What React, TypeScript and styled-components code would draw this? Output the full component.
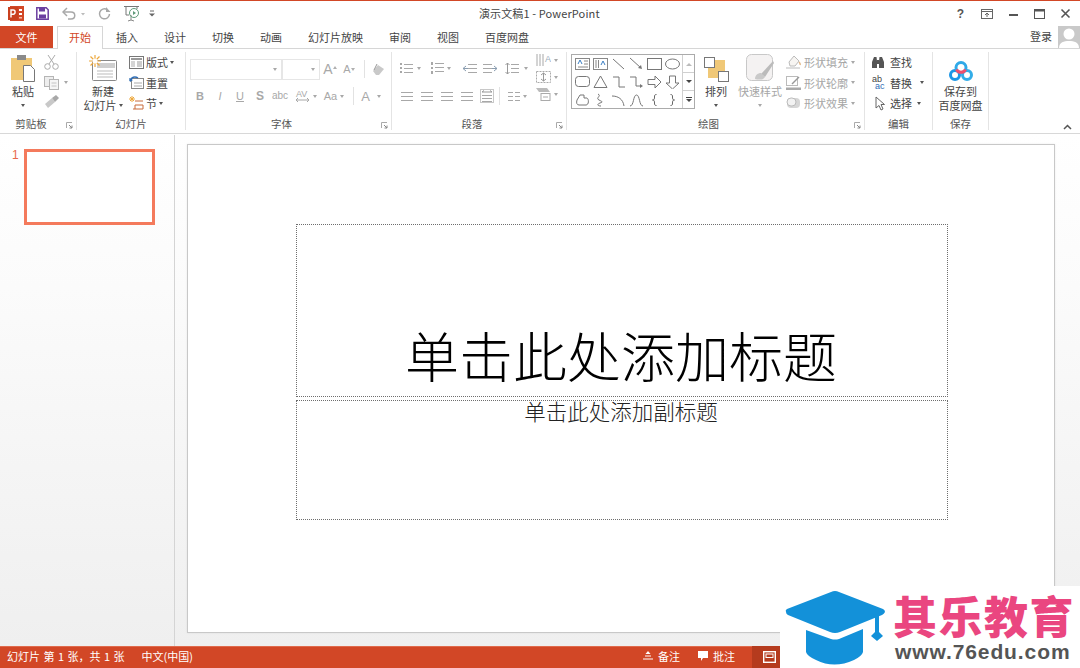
import React from 'react';
import styled, { createGlobalStyle } from 'styled-components';

const Global = createGlobalStyle`
  html, body { margin: 0; padding: 0; background: #fff; }
  * { box-sizing: border-box; }
  body { font-family: "Noto Sans CJK SC", "Liberation Sans", sans-serif; color: #444; }
`;

const Page = styled.div`
  position: relative; width: 1080px; height: 668px; overflow: hidden; display: flex; flex-direction: column;
  border-top: 1px solid #d24726; background: #fff;
`;

/* title bar */
const TitleBar = styled.div`height: 25px; display: flex; align-items: center; position: relative; flex: none;`;
const Qat = styled.div`display: flex; align-items: center; width: 479px; height: 25px; padding-left: 8px;`;
const QatSlot = styled.span<{ $w: number }>`width: ${p => p.$w}px; display: flex; align-items: center; flex: none;`;
const Title = styled.div`font-size: 11px; color: #444; width: 470px; white-space: nowrap; line-height: 25px; letter-spacing: .12px;`;
const WinControls = styled.div`margin-left: auto; display: flex; align-items: center; padding-right: 9px; gap: 15px;`;
const Help = styled.span`font-family: "Liberation Sans", sans-serif; font-size: 12px; font-weight: 700; color: #555; width: 11px; text-align: center; line-height: 14px;`;

/* tabs */
const TabRow = styled.div`height: 23px; display: flex; align-items: stretch; border-bottom: 1px solid #d6d6d6; flex: none;`;
const FileTab = styled.div`width: 53px; height: 22px; background: #d24726; color: #fff; font-size: 11px; display: flex; align-items: center; justify-content: center; margin-right: 4px; padding-bottom: 1px;`;
const Tab = styled.div<{ $active?: boolean }>`
  padding: 0 12px 2px; font-size: 11px; display: flex; align-items: center; height: ${p => (p.$active ? '23px' : '22px')};
  color: ${p => (p.$active ? '#d24726' : '#444')}; background: #fff; white-space: nowrap;
  border: 1px solid ${p => (p.$active ? '#d6d6d6' : 'transparent')}; border-bottom: 0; z-index: 1;
  width: ${p => (p.$active ? '46px' : 'auto')}; justify-content: center;
`;
const Account = styled.div`margin-left: auto; display: flex; align-items: center; height: 22px; gap: 6px; font-size: 11px;`;
const AccountName = styled.span`margin-top: -2px;`;
const Avatar = styled.div`width: 22px; height: 22px; background: #c9c9c9; display: flex;`;

/* ribbon */
const Ribbon = styled.div`height: 85px; display: flex; position: relative; flex: none; border-bottom: 1px solid #d8d8d8; background: #fff;`;
const Group = styled.div<{ $w: number; $pad?: number; $last?: boolean }>`
  width: ${p => p.$w}px; flex: none; display: flex; flex-direction: column; position: relative; margin-top: 3px; height: 78px;
  border-right: 1px solid ${p => (p.$last ? 'transparent' : '#e4e4e4')}; padding-left: ${p => p.$pad ?? 0}px;
`;
const GroupBody = styled.div<{ $gap?: number }>`height: 62px; display: flex; gap: ${p => p.$gap ?? 0}px;`;
const GroupLabel = styled.div<{ $launch?: boolean }>`
  position: absolute; left: 0; right: ${p => (p.$launch ? '14px' : '0')}; bottom: -2px; height: 16px; font-size: 10.5px; line-height: 16px; text-align: center; color: #555;
`;
const Launcher = styled.span`position: absolute; right: 3px; bottom: 1px; width: 7px; height: 7px; display: flex;`;
const BigBtn = styled.div<{ $w: number; $off?: boolean }>`
  width: ${p => p.$w}px; flex: none; display: flex; flex-direction: column; align-items: center; font-size: 11px; line-height: 14px;
  color: ${p => (p.$off ? '#a6a6a6' : '#444')}; white-space: nowrap;
`;
const BigIcon = styled.div`height: 30px; display: flex; align-items: flex-end; justify-content: center; margin-bottom: 2px;`;
const BigLine = styled.div`height: 14px; display: flex; align-items: center; gap: 2px;`;
const StackCol = styled.div<{ $w?: number; $ml?: number; $pt?: number; $gap?: number }>`
  display: flex; flex-direction: column; justify-content: flex-start; gap: ${p => p.$gap ?? 3.5}px; padding-top: ${p => p.$pt ?? 1.5}px;
  width: ${p => (p.$w ? p.$w + 'px' : 'auto')}; margin-left: ${p => p.$ml ?? 0}px; flex: none;
`;
const SmallBtn = styled.div<{ $off?: boolean; $gap?: number; $pl?: number }>`
  height: 17px; display: flex; align-items: center; gap: ${p => p.$gap ?? 3}px; font-size: 11px; white-space: nowrap;
  padding-left: ${p => p.$pl ?? 0}px; color: ${p => (p.$off ? '#a6a6a6' : '#444')};
`;
const Caret = styled.span<{ $off?: boolean }>`
  display: inline-block; width: 0; height: 0; border-left: 2.5px solid transparent; border-right: 2.5px solid transparent;
  border-top: 3px solid ${p => (p.$off ? '#a8a8a8' : '#555')}; flex: none;
`;
const CaretLine = styled.div`height: 10px; margin-top: 2px; display: flex; align-items: center; justify-content: center;`;
const FontRows = styled.div`display: flex; flex-direction: column; gap: 7px; padding: 7px 0 0 4px;`;
const IconRow = styled.div`display: flex; align-items: center; height: 20px;`;
const ComboA = styled.div<{ $w: number }>`
  width: ${p => p.$w}px; height: 21px; border: 1px solid #e6e6e6; background: #fff; display: flex; align-items: center; justify-content: flex-end; padding-right: 4px; flex: none;
`;
const Slot = styled.span<{ $w: number; $gap?: number }>`width: ${p => p.$w}px; flex: none; display: flex; align-items: center; justify-content: center; gap: ${p => p.$gap ?? 3}px;`;
const VLine = styled.span`width: 1px; height: 18px; background: #e2e2e2; flex: none;`;
const FmtLetter = styled.span<{ $b?: boolean; $i?: boolean; $u?: boolean; $s?: number }>`
  font-family: "Liberation Sans", sans-serif; font-size: ${p => p.$s ?? 11}px; color: #a8a8a8;
  font-weight: ${p => (p.$b ? 700 : 400)}; font-style: ${p => (p.$i ? 'italic' : 'normal')};
  text-decoration: ${p => (p.$u ? 'underline' : 'none')}; line-height: 1;
`;
const SuperTri = styled.span`
  width: 0; height: 0; align-self: flex-start; margin-top: 4px; border-left: 2px solid transparent; border-right: 2px solid transparent; border-bottom: 3px solid #b0b0b0; flex: none;
`;
const SuperTriDown = styled(SuperTri)`border-bottom: 0; border-top: 3px solid #b0b0b0;`;
const ParaWrap = styled.div`display: flex; padding-left: 5px;`;
const ParaLeft = styled.div`width: 138px; display: flex; flex-direction: column; gap: 8px; padding-top: 6px;`;
const ParaRight = styled.div`display: flex; flex-direction: column; gap: 3px; padding-top: 1px;`;

const Gallery = styled.div`
  margin: 2px 0 0 4px; width: 124px; height: 55px; border: 1px solid #ababab; display: flex; flex: none; background: #fff;
`;
const GalleryGrid = styled.div`width: 110px; display: grid; grid-template-columns: repeat(6, 18px); grid-auto-rows: 18px; padding-left: 1px;`;
const GalleryCell = styled.span`display: flex; align-items: center; justify-content: center;`;
const GalleryScroll = styled.div`width: 12px; border-left: 1px solid #d0d0d0; display: flex; flex-direction: column;`;
const ScrollBtn = styled.span`
  flex: 1; display: flex; align-items: center; justify-content: center; border-bottom: 1px solid #d0d0d0;
  &:last-child { border-bottom: 0; }
`;
const Collapse = styled.span`position: absolute; right: 8px; bottom: 3px; display: flex;`;

/* workspace */
const Work = styled.div`flex: 1; display: flex; min-height: 0; background: linear-gradient(#ffffff, #fbfbfb 30%, #efefef);`;
const ThumbPane = styled.div`
  width: 175px; flex: none; border-right: 1px solid #d4d4d4; margin-top: 1px; padding: 14px 0 0 12px; display: flex; align-items: flex-start;
`;
const ThumbNum = styled.span`font-size: 12px; color: #e8694a; line-height: 13px; width: 12px; font-family: "Liberation Sans", sans-serif;`;
const Thumb = styled.div`width: 131px; height: 76px; background: #fff; border: 3px solid #f47a5c;`;
const Editor = styled.div`flex: 1; padding: 10px 0 0 12px; min-width: 0;`;
const Slide = styled.div`
  width: 868px; height: 489px; background: #fff; border: 1px solid #c8c8c8; box-shadow: 0 0 2px rgba(0,0,0,.08);
  padding: 79px 0 0 108px; display: flex; flex-direction: column; gap: 3px;
`;
const Placeholder = styled.div<{ $h: number; $end?: boolean }>`
  width: 652px; height: ${p => p.$h}px; border: 1px dotted #6e6e6e; display: flex; justify-content: center;
  align-items: ${p => (p.$end ? 'flex-end' : 'flex-start')}; flex: none; color: #111;
`;
const SlideTitle = styled.div`font-size: 54px; font-weight: 300; line-height: 74px; margin: 0 0 4px -2px; white-space: nowrap; color: #000;`;
const SlideSub = styled.div`font-size: 21.5px; font-weight: 300; line-height: 26px; margin: -3px 0 0 -2px; white-space: nowrap; color: #222;`;

/* status */
const Status = styled.div`
  height: 22px; flex: none; background: #d24726; color: #fff; font-size: 11px; word-spacing: 1px; display: flex; align-items: center; padding: 0 0 3px 7px; white-space: nowrap; border-top: 1px solid #e06a4c;
`;
const StatusText = styled.span<{ $ml?: number }>`margin-left: ${p => p.$ml ?? 0}px;`;
const StatusItem = styled.span<{ $w: number }>`width: ${p => p.$w}px; display: flex; align-items: center; gap: 5px; flex: none; padding-bottom: 3px;`;
const StatusRight = styled.div`position: absolute; left: 643px; bottom: 0; height: 22px; display: flex; align-items: center;`;
const ViewActive = styled.span`width: 34px; height: 100%; background: #b53b1e; display: flex; align-items: center; justify-content: center; flex: none;`;

/* watermark */
const Watermark = styled.div`
  position: absolute; left: 780px; top: 585px; width: 300px; height: 82px; background: #fff; display: flex; padding: 4px 0 0 4px;
`;
const WmText = styled.div`margin-left: 7px; display: flex; flex-direction: column;`;
const WmName = styled.div`font-size: 44px; line-height: 50px; font-weight: 900; color: #ea4680; white-space: nowrap; letter-spacing: 1.5px;`;
const WmUrl = styled.div`font-family: "Liberation Sans", sans-serif; font-size: 21px; font-weight: 700; color: #555; line-height: 24px; letter-spacing: .9px; margin: 0 0 0 2px; white-space: nowrap;`;

const C = '#a8a8a8';
const Svg = ({ w, h, children }: { w: number; h: number; children: React.ReactNode }) => (
  <svg width={w} height={h} viewBox={`0 0 ${w} ${h}`} fill="none" style={{ flex: 'none', display: 'block' }}>{children}</svg>
);

const LauncherIcon = () => (
  <Launcher><Svg w={7} h={7}><path d="M.5.5H6M.5.5V6" stroke="#aaa" /><path d="M3 3l3 3M6 3.5V6H3.5" stroke="#888" /></Svg></Launcher>
);

const Lines = ({ n, x = 0, w = 12, gap = 3, y = 1, c = C }: { n: number; x?: number; w?: number; gap?: number; y?: number; c?: string }) => (
  <>{Array.from({ length: n }).map((_, i) => <rect key={i} x={x} y={y + i * gap} width={w} height={1} fill={c} />)}</>
);

const shapes: React.ReactNode[] = [
  <><rect x=".5" y="1.500" width="14" height="11" stroke="#888" /><path d="M3 7l2-4 2 4" stroke="#3b7fc4" /><path d="M9 4h4M9 7h4M3 10h10" stroke="#888" /></>,
  <><rect x=".5" y="1.500" width="14" height="11" stroke="#888" /><path d="M3 3v8M5.500 3v8" stroke="#888" /><path d="M8 8l2-4 2 4" stroke="#3b7fc4" /></>,
  <path d="M2 2l11 10" stroke="#777" />,
  <><path d="M1 1l11 10" stroke="#777" /><path d="M13 12l-4-1 3-3z" fill="#777" /></>,
  <rect x=".5" y="1.500" width="14" height="11" stroke="#777" />,
  <ellipse cx="7.500" cy="7" rx="7" ry="5" stroke="#777" />,
  <rect x=".5" y="1.500" width="14" height="10" rx="3" stroke="#777" />,
  <path d="M7.500 1L14 12.500H1z" stroke="#777" />,
  <path d="M2 2h6v10h6" stroke="#777" />,
  <><path d="M1 2h6v9h5" stroke="#777" /><path d="M14 11l-3-2v4z" fill="#777" /></>,
  <path d="M1 4.500h7V1l6 6-6 6V9.500H1z" stroke="#777" />,
  <path d="M4.500 1h6v7H14l-6.500 6L1 8h3.500z" stroke="#777" />,
  <path d="M2 7l3-5h4v3h3c2 1 2 7-1 7H4C2 12 1 10 2 7z" stroke="#777" />,
  <path d="M5 1c4 2-3 4 1 6s4 2 1 3-3 3 1 3" stroke="#777" />,
  <path d="M1 3c6 0 11 3 12 10" stroke="#777" />,
  <path d="M1 13c4 0 3-11 6.500-11S10 13 14 13" stroke="#777" />,
  <path d="M9.500 1.500c-2 0-2 1-2 2.500s0 3-2 3c2 0 2 1.500 2 3s0 2.500 2 2.500" stroke="#666" />,
  <path d="M5.500 1.500c2 0 2 1 2 2.500s0 3 2 3c-2 0-2 1.500-2 3s0 2.500-2 2.500" stroke="#666" />,
];

const TopCaretIcon = ({ up }: { up?: boolean }) => (
  <Svg w={6} h={4}><path d={up ? 'M0 4l3-3 3 3z' : 'M0 0l3 3 3-3z'} fill={up ? '#bbb' : '#444'} /></Svg>
);

export default function App() {
  return (
    <Page>
      <Global />
      <TitleBar>
        <Qat>
          <QatSlot $w={28}>
            <Svg w={16} h={15}>
              <rect x="2" y="0" width="14" height="15" fill="#d24726" />
              <rect x="11" y="3" width="3" height="2" fill="#fff" /><rect x="11" y="7" width="3" height="2" fill="#fff" /><rect x="11" y="11" width="3" height="1.500" fill="#f3b9a8" />
              <rect x="0" y="1" width="10" height="13" fill="#c9401f" />
              <path d="M3 11.500V4h2.300c2.400 0 2.400 4.200 0 4.200H3" stroke="#fff" strokeWidth="1.400" />
            </Svg>
          </QatSlot>
          <QatSlot $w={26}>
            <Svg w={13} h={13}>
              <path d="M.8.8h9.400l2 2v9.400H.8z" stroke="#6b3fa0" strokeWidth="1.500" /><rect x="3" y="1" width="6" height="3.500" fill="#6b3fa0" /><rect x="3" y="7.500" width="7" height="4" fill="#6b3fa0" />
            </Svg>
          </QatSlot>
          <QatSlot $w={36}>
            <Svg w={24} h={13}>
              <path d="M2 5h7c5 0 5 7 0 7H6" stroke="#a8a8a8" strokeWidth="1.500" /><path d="M5 1L1 5l4 4" stroke="#a8a8a8" strokeWidth="1.500" />
              <path d="M19 6h4l-2 2.500z" fill="#bbb" />
            </Svg>
          </QatSlot>
          <QatSlot $w={26}>
            <Svg w={13} h={13}>
              <path d="M9 2.500A5 5 0 1 0 11.500 7" stroke="#a8a8a8" strokeWidth="1.500" /><path d="M8 0v5h4.500z" fill="#a8a8a8" />
            </Svg>
          </QatSlot>
          <QatSlot $w={25}>
            <Svg w={15} h={17}>
              <path d="M0 1.500h15M2 2v8h3M13 2v2" stroke="#777" /><path d="M7 10v5l-3 1M7 15l3 1" stroke="#888" />
              <circle cx="10" cy="8" r="4.500" stroke="#5f9a79" /><path d="M9 6v4l3-2z" fill="#5f9a79" />
            </Svg>
          </QatSlot>
          <Svg w={6} h={7}><path d="M1 1h4" stroke="#666" /><path d="M0 3.500h6L3 6.500z" fill="#666" /></Svg>
        </Qat>
        <Title>演示文稿1 - PowerPoint</Title>
        <WinControls>
          <Help>?</Help>
          <Svg w={12} h={10}><rect x=".5" y=".5" width="11" height="9" stroke="#666" /><path d="M.5 2.500h11M6 8V4M4 6l2-2 2 2" stroke="#666" /></Svg>
          <Svg w={11} h={11}><rect x="1" y="6" width="9" height="2" fill="#555" /></Svg>
          <Svg w={11} h={10}><rect x=".5" y=".5" width="10" height="9" stroke="#555" /><rect x="0" y="0" width="11" height="2.500" fill="#555" /></Svg>
          <Svg w={11} h={11}><path d="M1.500 1.500l8 8M9.500 1.500l-8 8" stroke="#555" strokeWidth="1.600" /></Svg>
        </WinControls>
      </TitleBar>

      <TabRow>
        <FileTab>文件</FileTab>
        <Tab $active>开始</Tab>
        <Tab>插入</Tab><Tab>设计</Tab><Tab>切换</Tab><Tab>动画</Tab><Tab>幻灯片放映</Tab><Tab>审阅</Tab><Tab>视图</Tab><Tab>百度网盘</Tab>
        <Account>
          <AccountName>登录</AccountName>
          <Avatar>
            <Svg w={22} h={22}><circle cx="11" cy="8" r="5.500" fill="#fff" /><path d="M1 22c0-6 5-7 10-7s10 1 10 7z" fill="#fff" /></Svg>
          </Avatar>
        </Account>
      </TabRow>

      <Ribbon>
        <Group $w={77} $pad={7}>
          <GroupBody>
            <BigBtn $w={32}>
              <BigIcon>
                <Svg w={26} h={27}>
                  <rect x="1" y="3" width="21" height="22" fill="#f0c877" />
                  <rect x="7" y="0" width="9" height="5" fill="#8a8a8a" />
                  <path d="M13.500 10.500h7l4 4v12h-11z" fill="#fff" stroke="#777" />
                </Svg>
              </BigIcon>
              粘贴
              <CaretLine><Caret /></CaretLine>
            </BigBtn>
            <StackCol $ml={5} $w={28} $pt={3} $gap={4}>
              <Svg w={16} h={15}><path d="M4 0l6 9M11 0L5 9" stroke="#aaa" /><circle cx="3.500" cy="11.500" r="2.800" stroke="#aaa" /><circle cx="11.500" cy="11.500" r="2.800" stroke="#aaa" /></Svg>
              <SmallBtn $gap={5}>
                <Svg w={15} h={15}><rect x=".5" y="1.500" width="9" height="10" fill="#eee" stroke="#b5b5b5" /><rect x="5.500" y="4.500" width="9" height="10" fill="#f5f5f5" stroke="#b5b5b5" /><path d="M7.500 8h5M7.500 11h5" stroke="#c4c4c4" /></Svg>
                <Caret $off />
              </SmallBtn>
              <Svg w={15} h={14}><path d="M1 9l7-6 3 4-7 6z" fill="#c8c8c8" /><path d="M8 3l4-3 3 3-4 4z" fill="#a8a8a8" /></Svg>
            </StackCol>
          </GroupBody>
          <GroupLabel $launch>剪贴板</GroupLabel>
          <LauncherIcon />
        </Group>

        <Group $w={109} $pad={6}>
          <GroupBody>
            <BigBtn $w={40}>
              <BigIcon>
                <Svg w={28} h={27}>
                  <rect x="3.500" y="5.500" width="24" height="20" rx="1" fill="#fff" stroke="#888" />
                  <rect x="8" y="8" width="18" height="5" fill="#cfcfcf" />
                  <path d="M8 16h16M8 19h16M8 22h16" stroke="#bbb" />
                  <path d="M6 0v12M0 6h12M1.500 1.500l9 9M10.500 1.500l-9 9" stroke="#eda83c" strokeWidth="1.200" />
                  <circle cx="6" cy="6" r="2.500" fill="#fff" />
                </Svg>
              </BigIcon>
              新建
              <BigLine>幻灯片<Caret /></BigLine>
            </BigBtn>
            <StackCol $ml={6}>
              <SmallBtn $gap={2}>
                <Svg w={15} h={13}><rect x=".5" y=".5" width="14" height="12" stroke="#777" /><rect x="2" y="2" width="11" height="2" fill="#999" /><rect x="2" y="5" width="4" height="6" fill="#d5d5d5" /><path d="M8 6h5M8 8h5M8 10h5" stroke="#999" /></Svg>
                版式<Caret />
              </SmallBtn>
              <SmallBtn $gap={2}>
                <Svg w={15} h={13}><rect x="2.500" y="2.500" width="12" height="10" stroke="#888" /><path d="M5 7h8M5 10h8" stroke="#aaa" /><path d="M1 5c1-4 5-5 8-3" stroke="#2f6db5" strokeWidth="1.500" /><path d="M0 2l1 4 3-2z" fill="#2f6db5" /></Svg>
                重置
              </SmallBtn>
              <SmallBtn $gap={2}>
                <Svg w={15} h={14}><path d="M3 0v6M0 3h6M1 1l4 4M5 1L1 5" stroke="#eda83c" /><path d="M6 5h8M6 9h8M4 13h10M6 9v4M14 9v4" stroke="#c96a3b" /></Svg>
                节<Caret />
              </SmallBtn>
            </StackCol>
          </GroupBody>
          <GroupLabel>幻灯片</GroupLabel>
        </Group>

        <Group $w={206}>
          <GroupBody>
            <FontRows>
              <IconRow>
                <ComboA $w={92}><Caret $off /></ComboA>
                <ComboA $w={38}><Caret $off /></ComboA>
                <Slot $w={20} $gap={0}><FmtLetter $s={14}>A</FmtLetter><SuperTri /></Slot>
                <Slot $w={18} $gap={0}><FmtLetter $s={11}>A</FmtLetter><SuperTriDown /></Slot>
                <Slot $w={6} />
                <VLine />
                <Slot $w={26}>
                  <Svg w={13} h={13}><path d="M1 8l5-6 6 4-5 6H4z" fill="#c9c9c9" /><path d="M5 1L2 7" stroke="#999" /></Svg>
                </Slot>
              </IconRow>
              <IconRow>
                <Slot $w={20}><FmtLetter $b>B</FmtLetter></Slot>
                <Slot $w={20}><FmtLetter $i>I</FmtLetter></Slot>
                <Slot $w={20}><FmtLetter $u>U</FmtLetter></Slot>
                <Slot $w={20}><FmtLetter $b $s={12}>S</FmtLetter></Slot>
                <Slot $w={20}><FmtLetter $s={10}>abc</FmtLetter></Slot>
                <Slot $w={32}>
                  <Svg w={15} h={14}><text x="1" y="8" fontSize="9" fontFamily="Liberation Sans" fill="#a8a8a8">AV</text><path d="M1 11h13M1 11l2-2M1 11l2 2M14 11l-2-2M14 11l-2 2" stroke="#a8a8a8" /></Svg>
                  <Caret $off />
                </Slot>
                <Slot $w={24}><FmtLetter $s={11}>Aa</FmtLetter><Caret $off /></Slot>
                <Slot $w={7} />
                <VLine />
                <Slot $w={34} $gap={7}><FmtLetter $s={13}>A</FmtLetter><Caret $off /></Slot>
              </IconRow>
            </FontRows>
          </GroupBody>
          <GroupLabel $launch>字体</GroupLabel>
          <LauncherIcon />
        </Group>

        <Group $w={175}>
          <GroupBody>
            <ParaWrap>
              <ParaLeft>
                <IconRow>
                  <Slot $w={26}><Svg w={14} h={11}><Lines n={3} x={4} w={9} gap={4} /><rect x="0" y="0" width="2" height="2" fill={C} /><rect x="0" y="4" width="2" height="2" fill={C} /><rect x="0" y="8" width="2" height="2" fill={C} /></Svg><Caret $off /></Slot>
                  <Slot $w={34}><Svg w={14} h={12}><Lines n={3} x={5} w={9} gap={4} /><rect x="1" y="0" width="2" height="3" fill={C} /><rect x="1" y="5" width="2" height="2" fill={C} /><rect x="1" y="9" width="2" height="3" fill={C} /></Svg><Caret $off /></Slot>
                  <Slot $w={26}><Svg w={14} h={11}><Lines n={3} x={5} w={9} gap={4} /><path d="M5 5.500H0M3 3L0 5.500 3 8" stroke="#8a9db0" /></Svg></Slot>
                  <Slot $w={14}><Svg w={14} h={11}><Lines n={3} x={0} w={9} gap={4} /><path d="M9 5.500h5M11 3l3 2.500L11 8" stroke="#8a9db0" /></Svg></Slot>
                  <Slot $w={38} $gap={5}><Svg w={14} h={13}><Lines n={3} x={6} w={8} gap={4} y={2} /><path d="M2.500 1v11M.5 3l2-2 2 2M.5 10l2 2 2-2" stroke="#999" /></Svg><Caret $off /></Slot>
                </IconRow>
                <IconRow>
                  <Slot $w={20}><Svg w={12} h={10}><Lines n={3} gap={4} /></Svg></Slot>
                  <Slot $w={20}><Svg w={12} h={10}><Lines n={3} gap={4} /></Svg></Slot>
                  <Slot $w={20}><Svg w={12} h={10}><Lines n={3} gap={4} /></Svg></Slot>
                  <Slot $w={20}><Svg w={12} h={10}><Lines n={3} gap={4} /></Svg></Slot>
                  <Slot $w={20}><Svg w={14} h={14}><rect x=".5" y=".5" width="13" height="13" stroke="#c8c8c8" /><Lines n={3} x={2} w={10} gap={3} y={6} /><path d="M2 3h10M2 3l2-1.500M12 3l-2-1.500" stroke="#999" /></Svg></Slot>
                  <Slot $w={2} />
                  <VLine />
                  <Slot $w={34}><Svg w={12} h={10}><Lines n={3} w={5} gap={4} /><Lines n={3} x={7} w={5} gap={4} /></Svg><Caret $off /></Slot>
                </IconRow>
              </ParaLeft>
              <ParaRight>
                <Slot $w={24}><Svg w={15} h={14}><path d="M1 1v12M4 1v12M7 1v12" stroke="#a8a8a8" /><text x="9" y="9" fontSize="9" fontFamily="Liberation Sans" fill="#9ab">A</text></Svg><Caret $off /></Slot>
                <Slot $w={24}><Svg w={15} h={14}><rect x=".5" y="1.500" width="14" height="11" stroke="#aaa" strokeDasharray="2 1" /><path d="M7.500 3v8M5 5l2.500-2L10 5M5 9l2.500 2L10 9" stroke="#999" /></Svg><Caret $off /></Slot>
                <Slot $w={24}><Svg w={15} h={14}><path d="M0 1h11l3 4H3z" fill="#bbb" /><rect x="5" y="6.500" width="9" height="7" fill="#fff" stroke="#aaa" /><path d="M7 10h5" stroke="#aaa" /></Svg><Caret $off /></Slot>
              </ParaRight>
            </ParaWrap>
          </GroupBody>
          <GroupLabel $launch>段落</GroupLabel>
          <LauncherIcon />
        </Group>

        <Group $w={298}>
          <GroupBody>
            <Gallery>
              <GalleryGrid>
                {shapes.map((s, i) => <GalleryCell key={i}><Svg w={15} h={14}>{s}</Svg></GalleryCell>)}
              </GalleryGrid>
              <GalleryScroll>
                <ScrollBtn><TopCaretIcon up /></ScrollBtn>
                <ScrollBtn><TopCaretIcon /></ScrollBtn>
                <ScrollBtn><Svg w={6} h={6}><path d="M0 .5h6" stroke="#444" /><path d="M0 2l3 3 3-3z" fill="#444" /></Svg></ScrollBtn>
              </GalleryScroll>
            </Gallery>
            <BigBtn $w={42}>
              <BigIcon>
                <Svg w={25} h={25}>
                  <rect x="9" y="3" width="12" height="12" fill="#f0c877" />
                  <rect x="4" y="11" width="12" height="10" fill="#f0c877" />
                  <rect x=".5" y=".5" width="10" height="10" fill="#fff" stroke="#777" />
                  <rect x="14.500" y="14.500" width="10" height="10" fill="#fff" stroke="#777" />
                </Svg>
              </BigIcon>
              排列
              <CaretLine><Caret /></CaretLine>
            </BigBtn>
            <BigBtn $w={46} $off>
              <BigIcon>
                <Svg w={28} h={28}>
                  <rect x=".5" y=".5" width="26" height="26" rx="5" fill="#f4f2f2" stroke="#c8c8c8" />
                  <path d="M27 7L15 20l4 3L28 9z" fill="#bbb" />
                  <path d="M9 25c0-4 3-6 6-6l4 4c-2 3-6 3-10 2z" fill="#c9c9c9" />
                </Svg>
              </BigIcon>
              快速样式
              <CaretLine><Caret $off /></CaretLine>
            </BigBtn>
            <StackCol $ml={3}>
              <SmallBtn $off $gap={3}>
                <Svg w={15} h={14}><path d="M3 7l5-6 5 5-4 5H4z" fill="#f7f5f2" stroke="#bbb" /><path d="M13 7c1 1 1.500 2 1 3" stroke="#e3b98a" strokeWidth="1.500" /><rect x="0" y="12" width="14" height="2" fill="#ddd" /></Svg>
                形状填充<Caret $off />
              </SmallBtn>
              <SmallBtn $off $gap={3}>
                <Svg w={15} h={14}><rect x=".5" y=".5" width="11" height="9" stroke="#bbb" /><path d="M6 8l7-7" stroke="#999" strokeWidth="1.500" /><rect x="0" y="11.500" width="15" height="2.500" fill="#aaa" /></Svg>
                形状轮廓<Caret $off />
              </SmallBtn>
              <SmallBtn $off $gap={3}>
                <Svg w={15} h={14}><rect x="1" y="2" width="13" height="10" rx="4" fill="#d6d6d6" /><rect x="1" y="2" width="9" height="8" rx="4" fill="#f2f2f2" stroke="#bbb" /></Svg>
                形状效果<Caret $off />
              </SmallBtn>
            </StackCol>
          </GroupBody>
          <GroupLabel $launch>绘图</GroupLabel>
          <LauncherIcon />
        </Group>

        <Group $w={68} $pad={6}>
          <GroupBody>
            <StackCol>
              <SmallBtn $gap={5}>
                <Svg w={14} h={13}><path d="M1 6l2-5h2.500l.5 4v7H1zM8 5l.5-4H11l2 5v6H8zM6 4h2v4H6z" fill="#555" /></Svg>
                查找
              </SmallBtn>
              <SmallBtn $gap={3}>
                <Svg w={16} h={15}><text x="1" y="7" fontSize="9" fontFamily="Liberation Sans" fill="#444">ab</text><text x="4" y="14" fontSize="9" fontFamily="Liberation Sans" fill="#2f6db5">ac</text></Svg>
                替换<Slot $w={14}><Caret /></Slot>
              </SmallBtn>
              <SmallBtn $gap={5} $pl={4}>
                <Svg w={10} h={15}><path d="M1 1v11l3-2.500 2 4.500 2-1-2-4.500h3.500z" fill="#fff" stroke="#666" /></Svg>
                <span>选择</span><Caret />
              </SmallBtn>
            </StackCol>
          </GroupBody>
          <GroupLabel>编辑</GroupLabel>
        </Group>

        <Group $w={56}>
          <GroupBody>
            <BigBtn $w={55}>
              <BigIcon>
                <Svg w={24} h={22}>
                  <circle cx="6" cy="15" r="4.500" stroke="#1b96e6" strokeWidth="3" />
                  <circle cx="18" cy="15" r="4.500" stroke="#33ade8" strokeWidth="3" />
                  <circle cx="12" cy="7.500" r="5" stroke="#2fa9e8" strokeWidth="3" />
                  <path d="M7.500 9.500A5 5 0 0 0 16.500 9.500" stroke="#ef4f6d" strokeWidth="3" />
                </Svg>
              </BigIcon>
              保存到
              <span>百度网盘</span>
            </BigBtn>
          </GroupBody>
          <GroupLabel>保存</GroupLabel>
        </Group>
        <Collapse><Svg w={9} h={6}><path d="M1 5l3.500-3.500L8 5" stroke="#555" strokeWidth="1.500" /></Svg></Collapse>
      </Ribbon>

      <Work>
        <ThumbPane>
          <ThumbNum>1</ThumbNum>
          <Thumb />
        </ThumbPane>
        <Editor>
          <Slide>
            <Placeholder $h={173} $end><SlideTitle>单击此处添加标题</SlideTitle></Placeholder>
            <Placeholder $h={120}><SlideSub>单击此处添加副标题</SlideSub></Placeholder>
          </Slide>
        </Editor>
      </Work>

      <Status>
        <span>幻灯片 第 1 张，共 1 张</span>
        <StatusText $ml={17}>中文(中国)</StatusText>
        <StatusRight>
          <StatusItem $w={55}>
            <Svg w={10} h={10}><path d="M5 0l2.500 3h-5z" fill="#fff" /><path d="M2 5h6M0 8h10" stroke="#fff" /></Svg>
            备注
          </StatusItem>
          <StatusItem $w={54}>
            <Svg w={10} h={10}><path d="M0 0h10v7H5L3 10V7H0z" fill="#fff" /></Svg>
            批注
          </StatusItem>
          <ViewActive>
            <Svg w={13} h={12}><rect x=".7" y=".7" width="11.600" height="10.600" stroke="#fff" strokeWidth="1.400" /><rect x="3" y="3" width="7" height="3.500" stroke="#fff" /></Svg>
          </ViewActive>
        </StatusRight>
      </Status>

      <Watermark>
        <svg width="102" height="78" viewBox="0 0 102 78" fill="none" style={{ flex: 'none' }}>
          <path d="M2 22Q1 20 3 19L47 2Q51 0 55 2L99 19Q101 20 101 22Q100 24 98 25L56 42Q51 44 46 42L4 25Q2 24 2 22Z" fill="#1391d9" />
          <path d="M22 40L47 49Q51 50 55 49L79 39V62Q78 66 70 70Q50 79 32 70Q23 66 22 62Z" fill="#1391d9" />
          <path d="M91 26H95V42H91Z" fill="#1391d9" />
          <path d="M93 40L99 46L93 51L87 46Z" fill="#1391d9" />
        </svg>
        <WmText>
          <WmName>其乐教育</WmName>
          <WmUrl>www.76edu.com</WmUrl>
        </WmText>
      </Watermark>
    </Page>
  );
}
